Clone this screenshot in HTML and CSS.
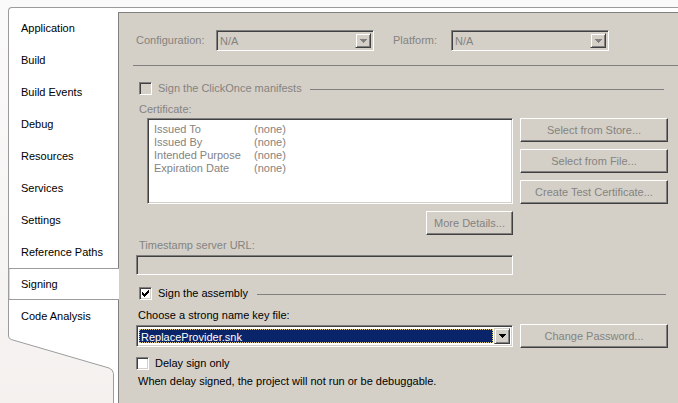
FILE: index.html
```html
<!DOCTYPE html>
<html>
<head>
<meta charset="utf-8">
<link rel="stylesheet" href="styles.css">
</head>
<body>
<div class="frame">
  <div class="frame-top"></div>
  <div class="frame-body">
    <div class="tabs">
      <div class="tab-list">
        <div class="tab">Application</div>
        <div class="tab">Build</div>
        <div class="tab">Build Events</div>
        <div class="tab">Debug</div>
        <div class="tab">Resources</div>
        <div class="tab">Services</div>
        <div class="tab">Settings</div>
        <div class="tab">Reference Paths</div>
        <div class="tab selected">Signing</div>
        <div class="tab">Code Analysis</div>
      </div>
      <svg class="tab-tail" width="110" height="71" viewBox="0 0 110 71">
        <path d="M0 0 L0 4 Q0 7.5 3.5 8 L101 36.5 Q105.5 38 105.5 42 L105.5 71 L110 71 L110 0 Z" fill="#ffffff"/>
        <path d="M0.5 0 L0.5 4 Q0.5 7 3.5 7.6 L101 36 Q105 37.5 105.5 41.5 L105.5 71" fill="none" stroke="#9c9c9c" stroke-width="1"/>
      </svg>
    </div>
    <div class="panel">
      <div class="config-row">
        <span class="dis cfg-label">Configuration:</span>
        <div class="field combo dis-field cfg-combo">
          <span class="combo-text dis">N/A</span>
          <span class="drop"><svg width="7" height="4" viewBox="0 0 7 4"><path d="M0 0h7v1h-1v1h-1v1h-1v1h-1v-1h-1v-1h-1v-1h-1z" fill="#808080"/></svg></span>
        </div>
        <span class="dis plat-label">Platform:</span>
        <div class="field combo dis-field cfg-combo">
          <span class="combo-text dis">N/A</span>
          <span class="drop"><svg width="7" height="4" viewBox="0 0 7 4"><path d="M0 0h7v1h-1v1h-1v1h-1v1h-1v-1h-1v-1h-1v-1h-1z" fill="#808080"/></svg></span>
        </div>
      </div>
      <div class="sep"></div>
      <div class="check-row clickonce">
        <span class="checkbox dis-field"></span>
        <span class="dis check-label">Sign the ClickOnce manifests</span>
        <span class="group-line line-a"></span>
      </div>
      <div class="dis label cert-label">Certificate:</div>
      <div class="cert-row">
        <div class="cert-col">
          <div class="field listbox">
            <div class="cert-line"><span class="cert-key">Issued To</span><span>(none)</span></div>
            <div class="cert-line"><span class="cert-key">Issued By</span><span>(none)</span></div>
            <div class="cert-line"><span class="cert-key">Intended Purpose</span><span>(none)</span></div>
            <div class="cert-line"><span class="cert-key">Expiration Date</span><span>(none)</span></div>
          </div>
          <div class="btn more-btn">More Details...</div>
        </div>
        <div class="btn-col">
          <div class="btn">Select from Store...</div>
          <div class="btn">Select from File...</div>
          <div class="btn">Create Test Certificate...</div>
        </div>
      </div>
      <div class="dis label ts-label">Timestamp server URL:</div>
      <div class="field dis-field textbox"></div>
      <div class="check-row assembly">
        <span class="checkbox"><svg width="7" height="7" viewBox="0 0 7 7"><path d="M0 2h1v1h1v1h1v-1h1v-1h1v-1h1v-1h1v3h-1v1h-1v1h-1v1h-1v1h-1v-1h-1v-1h-1z" fill="#000"/></svg></span>
        <span class="check-label">Sign the assembly</span>
        <span class="group-line line-b"></span>
      </div>
      <div class="label key-label">Choose a strong name key file:</div>
      <div class="key-row">
        <div class="field combo key-combo">
          <span class="selection">ReplaceProvider.snk</span>
          <span class="drop"><svg width="7" height="4" viewBox="0 0 7 4"><path d="M0 0h7v1h-1v1h-1v1h-1v1h-1v-1h-1v-1h-1v-1h-1z" fill="#000"/></svg></span>
        </div>
        <div class="btn pw-btn">Change Password...</div>
      </div>
      <div class="check-row delay">
        <span class="checkbox"></span>
        <span class="check-label">Delay sign only</span>
      </div>
      <div class="label desc">When delay signed, the project will not run or be debuggable.</div>
    </div>
  </div>
</div>
</body>
</html>
```

FILE: styles.css
```css
html, body {
  margin: 0;
  padding: 0;
}
body {
  width: 678px;
  height: 403px;
  overflow: hidden;
  background: linear-gradient(to bottom, #fbfafa 0%, #f4f1ef 100%);
  font-family: "Liberation Sans", Arial, sans-serif;
  font-size: 11px;
  line-height: 13px;
  color: #000;
}
.frame {
  margin: 7px 0 0 8px;
  height: 396px;
  display: flex;
  flex-direction: column;
}
.frame-top {
  height: 4px;
  background: #fff;
  border-top: 1px solid #9c9c9c;
  border-left: 1px solid #9c9c9c;
  border-top-left-radius: 4px;
}
.frame-body {
  flex: 1;
  display: flex;
}
.tabs {
  width: 110px;
  display: flex;
  flex-direction: column;
}
.tab-list {
  background: #fff;
  border-left: 1px solid #9c9c9c;
}
.tab {
  height: 32px;
  box-sizing: border-box;
  display: flex;
  align-items: center;
  padding-left: 12px;
}
.tab.selected {
  position: relative;
  z-index: 1;
  width: 110px;
  margin-right: -1px;
  background: #fff;
  border-top: 1px solid #9c9c9c;
  border-bottom: 1px solid #9c9c9c;
  box-shadow: inset 1px 0 0 #d8d8d8;
}
.tab-tail {
  display: block;
  flex: 1;
}
.panel {
  flex: 1;
  background: #d4d0c8;
  border-top: 1px solid #808080;
  border-left: 1px solid #808080;
  padding: 17px 10px 0 17px;
  overflow: hidden;
}
.dis {
  color: #858380;
}
.config-row {
  display: flex;
  align-items: center;
  height: 21px;
}
.cfg-label {
  width: 80px;
}
.plat-label {
  width: 58px;
  margin-left: 19px;
}
.field {
  box-sizing: border-box;
  border: 1px solid;
  border-color: #808080 #ffffff #ffffff #808080;
  box-shadow: inset 1px 1px 0 #404040, inset -1px -1px 0 #d4d0c8;
  background: #fff;
}
.dis-field {
  background: #d4d0c8;
}
.combo {
  display: flex;
  align-items: stretch;
  padding: 2px;
}
.cfg-combo {
  width: 158px;
  height: 21px;
}
.combo-text {
  flex: 1;
  padding-left: 1px;
  line-height: 17px;
}
.drop {
  width: 16px;
  box-sizing: border-box;
  border: 1px solid;
  border-color: #d4d0c8 #404040 #404040 #d4d0c8;
  box-shadow: inset 1px 1px 0 #fff, inset -1px -1px 0 #808080;
  background: #d4d0c8;
  display: flex;
  align-items: center;
  justify-content: center;
}
.drop svg {
  display: block;
  shape-rendering: crispEdges;
}
.sep {
  margin: 14px -10px 0 -3px;
  border-top: 1px solid #808080;
}
.check-row {
  display: flex;
  align-items: center;
  height: 13px;
}
.checkbox {
  width: 13px;
  height: 13px;
  flex: none;
  box-sizing: border-box;
  border: 1px solid;
  border-color: #808080 #ffffff #ffffff #808080;
  box-shadow: inset 1px 1px 0 #404040, inset -1px -1px 0 #d4d0c8;
  background: #fff;
  display: flex;
  align-items: center;
  justify-content: center;
}
.checkbox svg {
  display: block;
  shape-rendering: crispEdges;
}
.checkbox.dis-field {
  background: #d4d0c8;
}
.check-label {
  margin-left: 6px;
  white-space: nowrap;
}
.group-line {
  flex: 1;
  height: 0;
  border-top: 1px solid #808080;
  margin-top: 1px;
}
.clickonce {
  margin-top: 16px;
  padding-left: 3px;
}
.line-a {
  margin-left: 8px;
  margin-right: 4px;
}
.label {
  white-space: nowrap;
}
.cert-label {
  margin-top: 8px;
  padding-left: 3px;
}
.cert-row {
  display: flex;
  margin-top: 2px;
}
.cert-col {
  width: 366px;
  margin-left: 11px;
  display: flex;
  flex-direction: column;
}
.listbox {
  height: 86px;
  padding: 4px 6px 0 6px;
  color: #858380;
}
.cert-line {
  display: flex;
  height: 13px;
}
.cert-key {
  width: 100px;
}
.btn-col {
  margin-left: 7px;
  width: 148px;
  display: flex;
  flex-direction: column;
  gap: 7px;
}
.btn {
  height: 24px;
  box-sizing: border-box;
  border: 1px solid;
  border-color: #ffffff #404040 #404040 #ffffff;
  box-shadow: inset -1px -1px 0 #808080;
  background: #d4d0c8;
  color: #858380;
  display: flex;
  align-items: center;
  justify-content: center;
  white-space: nowrap;
}
.more-btn {
  margin-top: 7px;
  width: 87px;
  align-self: flex-end;
}
.ts-label {
  margin-top: 4px;
  padding-left: 3px;
}
.textbox {
  margin-top: 3px;
  width: 377px;
  height: 20px;
}
.assembly {
  margin-top: 12px;
  padding-left: 3px;
}
.line-b {
  margin-left: 9px;
  margin-right: 2px;
}
.key-label {
  margin-top: 9px;
  padding-left: 2px;
}
.key-row {
  display: flex;
  align-items: center;
  margin-top: 2px;
  height: 24px;
}
.key-combo {
  width: 377px;
  height: 22px;
}
.selection {
  flex: 1;
  margin: 1px 1px 1px 0;
  background: #0a246a;
  color: #fff;
  outline: 1px dotted #e0c880;
  outline-offset: -1px;
  line-height: 16px;
  padding-left: 2px;
}
.pw-btn {
  margin-left: 7px;
  width: 148px;
}
.delay {
  margin-top: 9px;
}
.desc {
  margin-top: 5px;
  padding-left: 2px;
}
```
